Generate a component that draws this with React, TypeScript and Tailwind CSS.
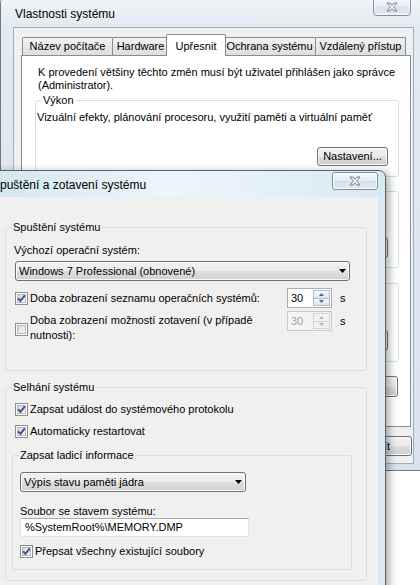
import React from "react";

const ui = "font-['Liberation_Sans',Arial,sans-serif]";

function CloseBtn({ className }: { className: string }) {
  return (
    <div
      className={
        "absolute flex items-center justify-center border border-[#858f9b] bg-[linear-gradient(#f6f9fc,#e4ebf2_50%,#d6e0ea_51%,#e2eaf2)] shadow-[inset_0_0_0_1px_rgba(255,255,255,0.75)] " +
        className
      }
    >
      <svg width="12" height="10" viewBox="0 0 12 10">
        <path
          d="M1 1H4L6 3.4L8 1H11L7.6 5L11 9H8L6 6.6L4 9H1L4.4 5Z"
          fill="#fff"
          stroke="#737b85"
          strokeWidth="1"
          strokeLinejoin="round"
        />
      </svg>
    </div>
  );
}

function Btn({ children, className = "" }: { children?: React.ReactNode; className?: string }) {
  return (
    <div
      className={
        "flex items-center justify-center rounded-[3px] border border-[#707070] bg-[linear-gradient(#f2f2f2,#ebebeb_50%,#dddddd_51%,#cfcfcf)] text-[11px] text-black shadow-[inset_0_0_0_1px_#fcfcfc] " +
        className
      }
    >
      {children}
    </div>
  );
}

function Tab({ children, className = "" }: { children: React.ReactNode; className?: string }) {
  return (
    <div
      className={
        "flex h-[18px] items-center justify-center rounded-t-[2px] border border-b-0 border-[#898c95] bg-[linear-gradient(#f4f4f4,#e6e6e6_50%,#dedede)] " +
        className
      }
    >
      {children}
    </div>
  );
}

function Check({ on }: { on?: boolean }) {
  return (
    <span className="relative block h-[13px] w-[13px] shrink-0 border border-[#8e8f8f] bg-white">
      <span className="absolute left-[1px] top-[1px] h-[9px] w-[9px] border border-[#b4b7bb] bg-gradient-to-br from-[#d3d6da] to-[#f8f8f8]" />
      {on && (
        <svg className="absolute left-0 top-0" width="11" height="11" viewBox="0 0 11 11">
          <path d="M2.2 5.4L4.5 7.9L8.8 2.4" fill="none" stroke="#3b4f8e" strokeWidth="1.9" />
        </svg>
      )}
    </span>
  );
}

function Combo({ children, className = "" }: { children: React.ReactNode; className?: string }) {
  return (
    <div
      className={
        "flex h-[20px] items-center rounded-[3px] border border-[#707070] bg-[linear-gradient(#f3f3f3,#ebebeb_50%,#dedede_51%,#d2d2d2)] pl-[3px] pr-[3px] shadow-[inset_0_0_0_1px_#fbfbfb] " +
        className
      }
    >
      <span className="flex-1 leading-[16px]">{children}</span>
      <svg width="7" height="4" viewBox="0 0 7 4">
        <path d="M0 0H7L3.5 4Z" fill="#000" />
      </svg>
    </div>
  );
}

function Arrow({ up, color }: { up?: boolean; color: string }) {
  return (
    <svg width="5" height="3" viewBox="0 0 5 3">
      <path d={up ? "M0 3H5L2.5 0Z" : "M0 0H5L2.5 3Z"} fill={color} />
    </svg>
  );
}

function Spin({ disabled }: { disabled?: boolean }) {
  const arrow = disabled ? "#b4b4b4" : "#4d6a92";
  const half = disabled
    ? "flex flex-1 items-center justify-center border border-[#d3d3d3] bg-[#f2f2f2]"
    : "flex flex-1 items-center justify-center border border-[#b3bfcd] bg-gradient-to-b from-[#f6f9fc] to-[#dde5ef]";
  return (
    <div
      className={
        "flex h-[20px] w-[45px] shrink-0 border " +
        (disabled ? "border-[#c9c9c9] bg-[#f4f4f4] text-[#a0a0a0]" : "border-[#abadb3] bg-white text-black")
      }
    >
      <span className="flex-1 pl-[3px] leading-[18px]">30</span>
      <div className="my-px mr-px flex w-[17px] flex-col">
        <div className={half}>
          <Arrow up color={arrow} />
        </div>
        <div className={half + " -mt-px"}>
          <Arrow color={arrow} />
        </div>
      </div>
    </div>
  );
}

// group boxes of the back dialog that sit under the front window: only their right edges show
function HiddenGroup({ className, btnTop }: { className: string; btnTop: string }) {
  return (
    <div className={"ml-[13px] w-[364px] rounded-[3px] border border-[#d5dfe5] pr-[10px] " + className}>
      <div className={"flex justify-end " + btnTop}>
        <Btn className="h-[21px] w-[71px]" />
      </div>
    </div>
  );
}

function BackWindow() {
  return (
    <div className="absolute left-0 top-[-4px] h-[475px] w-[432px] rounded-t-[7px] border border-[#6e7b8a] bg-[linear-gradient(180deg,#f1f5f9,#e2eaf2_30px,#d8e3ee)]">
      <CloseBtn className="left-[372px] top-0 h-[19px] w-[38px] rounded-b-[4px]" />
      <div className="h-[30px] pl-[14px] pt-[9px] text-[12px] leading-[16px] text-black">Vlastnosti systému</div>
      <div className="ml-[12px] h-[437px] w-[401px] border border-[#a3aebb] bg-[#f0f0f0] pt-[6px] text-[11px] text-black">
        <div className="flex h-[21px] items-end pl-[8px]">
          <Tab className="w-[91px]">Název počítače</Tab>
          <Tab className="-ml-px w-[57px]">Hardware</Tab>
          <div className="relative z-10 -mb-px -ml-[3px] flex h-[22px] w-[60px] justify-center rounded-t-[2px] border border-b-0 border-[#898c95] bg-white pt-[3px]">
            Upřesnit
          </div>
          <Tab className="-ml-[3px] w-[93px]">Ochrana systému</Tab>
          <Tab className="-ml-px w-[91px]">Vzdálený přístup</Tab>
        </div>
        <div className="ml-[7px] h-[372px] w-[390px] border border-[#898c95] bg-white pt-[10px]">
          <p className="whitespace-nowrap pl-[16px] leading-[13px]">
            K provedení většiny těchto změn musí být uživatel přihlášen jako správce
            <br />
            (Administrator).
          </p>
          <fieldset className="ml-[13px] mt-[2px] w-[364px] rounded-[3px] border border-[#d5dfe5]">
            <legend className="ml-[5px] px-[2px] leading-[13px]">Výkon</legend>
            <div className="pb-[10px] pl-[1px] pr-[10px]">
              <div className="mt-[4px] leading-[13px]">
                Vizuální efekty, plánování procesoru, využití paměti a virtuální paměť
              </div>
              <div className="mt-[23px] flex justify-end">
                <Btn className="h-[19px] w-[71px]">Nastavení...</Btn>
              </div>
            </div>
          </fieldset>
          <HiddenGroup className="mt-[14px] h-[77px]" btnTop="mt-[45px]" />
          <HiddenGroup className="mt-[15px] h-[79px]" btnTop="mt-[46px]" />
          <div className="mt-[14px] flex justify-end pr-[12px]">
            <Btn className="h-[21px] w-[120px]" />
          </div>
        </div>
        <div className="mt-[9px] flex justify-end pr-[1px]">
          <Btn className="h-[20px] w-[75px] text-[#a0a0a0]">Použít</Btn>
        </div>
      </div>
    </div>
  );
}

function FrontWindow() {
  return (
    <div className="absolute left-[-13px] top-[170px] h-[440px] w-[399px] rounded-t-[7px] border border-[#59626d] bg-[linear-gradient(90deg,#d3e6ee,#ecf6fa_45%,#e4f1f6_70%,#d7e9f1)] shadow-[3px_2px_9px_rgba(0,0,0,0.35)]">
      <CloseBtn className="right-[7px] top-[1px] h-[18px] w-[46px] rounded-[3px]" />
      <div className="h-[26px] pl-[4px] pt-[6px] text-[12px] leading-[16px] text-black">Spuštění a zotavení systému</div>
      <div className="mx-[7px] h-[420px] bg-[#f0f0f0] pl-[10px] pr-[11px] pt-[22px] text-[11px] text-black">
        <fieldset className="rounded-[3px] border border-[#d5dfe5]">
          <legend className="ml-[6px] px-[1px] leading-[16px]">Spuštění systému</legend>
          <div className="pb-[27px] pl-[9px] pr-[16px]">
            <div className="-ml-px mt-[7px] leading-[16px]">Výchozí operační systém:</div>
            <Combo className="mt-[3px] w-full">Windows 7 Professional (obnovené)</Combo>
            <div className="mt-[7px] flex h-[20px] items-center">
              <Check on />
              <span className="ml-[2px] flex-1 leading-[16px]">Doba zobrazení seznamu operačních systémů:</span>
              <Spin />
              <span className="w-[18px] pl-[8px] leading-[16px]">s</span>
            </div>
            <div className="mt-[3px] flex items-start">
              <div className="mt-[12px]">
                <Check />
              </div>
              <span className="ml-[2px] mt-[2px] flex-1 leading-[15px]">
                Doba zobrazení možností zotavení (v případě
                <br />
                nutnosti):
              </span>
              <Spin disabled />
              <span className="w-[18px] pl-[8px] leading-[20px]">s</span>
            </div>
          </div>
        </fieldset>
        <fieldset className="mt-[8px] rounded-[3px] border border-[#d5dfe5]">
          <legend className="ml-[6px] px-[1px] leading-[16px]">Selhání systému</legend>
          <div className="pb-[10px] pl-[6px] pr-[14px]">
            <div className="ml-[3px] mt-[6px] flex h-[16px] items-center">
              <Check on />
              <span className="ml-[2px]">Zapsat událost do systémového protokolu</span>
            </div>
            <div className="ml-[3px] mt-[6px] flex h-[16px] items-center">
              <Check on />
              <span className="ml-[2px]">Automaticky restartovat</span>
            </div>
            <fieldset className="mt-[8px] rounded-[3px] border border-[#d5dfe5]">
              <legend className="ml-[6px] px-[1px] leading-[16px]">Zapsat ladicí informace</legend>
              <div className="pb-[10px] pl-[7px]">
                <Combo className="mt-[9px] w-[226px]">Výpis stavu paměti jádra</Combo>
                <div className="mt-[12px] leading-[14px]">Soubor se stavem systému:</div>
                <div className="h-[19px] w-[229px] border border-[#e2e3ea] border-t-[#abadb3] bg-white pl-[4px] leading-[17px]">
                  {"%SystemRoot%\\MEMORY.DMP"}
                </div>
                <div className="mt-[6px] flex h-[16px] items-center">
                  <Check on />
                  <span className="ml-[2px]">Přepsat všechny existující soubory</span>
                </div>
              </div>
            </fieldset>
          </div>
        </fieldset>
      </div>
    </div>
  );
}

export default function App() {
  return (
    <div className={"relative h-[585px] w-[420px] overflow-hidden bg-white " + ui}>
      <BackWindow />
      <FrontWindow />
    </div>
  );
}
